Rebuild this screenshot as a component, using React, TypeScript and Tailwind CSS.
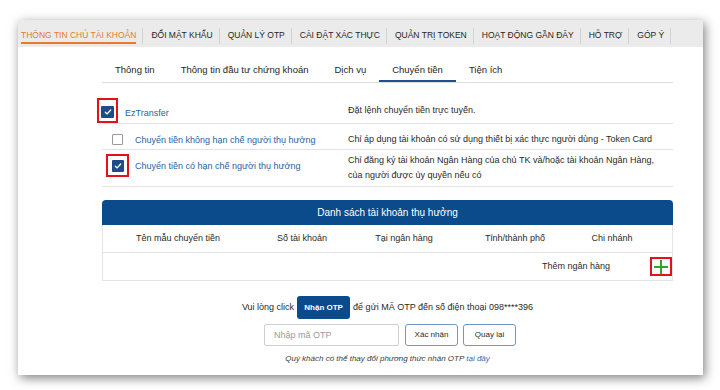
const topTabs = [
  "THÔNG TIN CHỦ TÀI KHOẢN",
  "ĐỔI MẬT KHẨU",
  "QUẢN LÝ OTP",
  "CÀI ĐẶT XÁC THỰC",
  "QUẢN TRỊ TOKEN",
  "HOẠT ĐỘNG GẦN ĐÂY",
  "HỖ TRỢ",
  "GÓP Ý",
];

const subTabs = ["Thông tin", "Thông tin đầu tư chứng khoán", "Dịch vụ", "Chuyển tiền", "Tiện ích"];

const columns = ["Tên mẫu chuyển tiền", "Số tài khoản", "Tại ngân hàng", "Tỉnh/thành phố", "Chi nhánh"];

function CheckBox({ checked, size = "w-[12px] h-[12px]" }: { checked: boolean; size?: string }) {
  if (!checked) {
    return <span className={`${size} block border border-[#9a9a9a] bg-white rounded-[1px]`} />;
  }
  return (
    <span className={`${size} flex items-center justify-center bg-[#1d4c8a] rounded-[1px]`}>
      <svg viewBox="0 0 12 12" className="w-[10px] h-[10px]">
        <path d="M2.8 6.3 L5 8.3 L9.2 3.6" fill="none" stroke="white" strokeWidth="1.6" strokeLinecap="round" strokeLinejoin="round" />
      </svg>
    </span>
  );
}

function TopTabs() {
  return (
    <div className="mt-[3px] h-[27px] bg-[#ebebeb] flex items-start text-[8.5px] text-[#262626]">
      {topTabs.map((t, i) => (
        <div key={t} className="flex items-start">
          <div className={`${i === 0 ? "pl-[3px]" : "pl-[8px]"} pr-[6px] pt-[10px]`}>
            <span
              className={`block leading-[11px] ${
                i === 0 ? "text-[#e8792e] border-b-2 border-[#e8792e] pb-[1px]" : ""
              }`}
            >
              {t}
            </span>
          </div>
          <div className="w-px h-[16px] mt-[8px] bg-[#d2d2d2]" />
        </div>
      ))}
    </div>
  );
}

function SubTabs() {
  return (
    <div className="mt-[11px] flex border-b border-[#dedede] text-[9.5px] text-[#262626]">
      {subTabs.map((t) => (
        <div
          key={t}
          className={`px-[13px] pt-[6px] pb-[4px] leading-[12px] border-b-2 ${
            t === "Chuyển tiền" ? "border-[#1d4f91]" : "border-transparent"
          }`}
        >
          {t}
        </div>
      ))}
    </div>
  );
}

function ServiceRows() {
  return (
    <div className="mt-[14px] text-[9px]">
      <div className="flex h-[27px] border-b border-[#e3e3e3]">
        <div className="w-[246px] flex items-start pt-[1px]">
          <span className="-ml-[5px] w-[21px] h-[25px] border-2 border-[#e3111b] flex items-center justify-center pt-[3px]">
            <CheckBox checked size="w-[13px] h-[12px]" />
          </span>
          <span className="ml-[7px] mt-[9px] leading-[12px] text-[#2a62a6]">EzTransfer</span>
        </div>
        <div className="pt-[7px] leading-[12px] text-[#2a2a2a]">Đặt lệnh chuyển tiền trực tuyến.</div>
      </div>
      <div className="flex h-[26px] border-b border-[#e3e3e3]">
        <div className="w-[246px] flex items-start">
          <span className="ml-[10px] mt-[10px]">
            <CheckBox checked={false} size="w-[11px] h-[11px]" />
          </span>
          <span className="ml-[12px] mt-[10px] leading-[12px] text-[#2a62a6]">
            Chuyển tiền không hạn chế người thụ hưởng
          </span>
        </div>
        <div className="pt-[9px] leading-[12px] text-[#2a2a2a]">
          Chỉ áp dụng tài khoản có sử dụng thiết bị xác thực người dùng - Token Card
        </div>
      </div>
      <div className="flex h-[37px] border-b border-[#e3e3e3]">
        <div className="w-[246px] flex items-start">
          <span className="ml-[4px] mt-[4px] w-[23px] h-[23px] border-2 border-[#e3111b] flex items-center justify-center">
            <CheckBox checked />
          </span>
          <span className="ml-[6px] mt-[10px] leading-[12px] text-[#2a62a6]">
            Chuyển tiền có hạn chế người thụ hưởng
          </span>
        </div>
        <div className="pt-[3px] leading-[15px] text-[#2a2a2a]">
          Chỉ đăng ký tài khoản Ngân Hàng của chủ TK và/hoặc tài khoản Ngân Hàng,
          <br />
          của người được ủy quyền nếu có
        </div>
      </div>
    </div>
  );
}

function BeneficiaryTable() {
  return (
    <div className="mt-[13px] text-[9px] text-[#2a2a2a]">
      <div className="h-[25px] bg-[#0b4a8b] rounded-t-[4px] flex items-center justify-center text-white text-[10px]">
        Danh sách tài khoản thụ hưởng
      </div>
      <div className="border-x border-[#e4e4e4]">
        <div className="grid grid-cols-[150px_98px_106px_116px_78px_1fr] h-[28px] items-center border-b border-[#e4e4e4] text-center">
          {columns.map((c) => (
            <div key={c}>{c}</div>
          ))}
          <div />
        </div>
        <div className="h-[28px] flex items-center justify-end border-b border-[#e4e4e4]">
          <span>Thêm ngân hàng</span>
          <span className="ml-[40px] w-[22px] h-[19px] border-2 border-[#e3111b] flex items-center justify-center">
            <svg viewBox="0 0 14 14" className="w-[14px] h-[14px]">
              <rect x="6" y="0" width="2" height="14" fill="#2aa82a" />
              <rect x="0" y="6" width="14" height="2" fill="#2aa82a" />
            </svg>
          </span>
        </div>
      </div>
    </div>
  );
}

function OtpBox() {
  return (
    <div className="text-[9px] text-[#2a2a2a]">
      <div className="mt-[15px] flex items-center justify-center">
        <span>Vui lòng click</span>
        <button className="ml-[3px] w-[53px] h-[23px] rounded-[3px] bg-[#0b4a8b] text-white text-[8px] font-bold">
          Nhận OTP
        </button>
        <span className="ml-[3px]">để gửi MÃ OTP đến số điện thoại 098****396</span>
      </div>
      <div className="mt-[5px] pl-[5px] flex items-center justify-center">
        <input
          placeholder="Nhập mã OTP"
          className="w-[135px] h-[22px] border border-[#cfcfcf] rounded-[2px] pl-[9px] text-[9px] placeholder:text-[#9a9a9a] outline-none"
        />
        <button className="ml-[6px] w-[53px] h-[22px] border border-[#6d98c8] rounded-[3px] bg-white text-[8px] text-[#2a2a2a]">
          Xác nhận
        </button>
        <button className="ml-[5px] w-[53px] h-[22px] border border-[#6d98c8] rounded-[3px] bg-white text-[8px] text-[#2a2a2a]">
          Quay lại
        </button>
      </div>
      <div className="mt-[8px] text-center leading-[10px] italic text-[8px] text-[#3a3a3a]">
        Quý khách có thể thay đổi phương thức nhận OTP <span className="text-[#2d6bb0]">tại đây</span>
      </div>
    </div>
  );
}

export default function App() {
  return (
    <div className="w-[720px] h-[390px] bg-white pt-[17px] pl-[18px] font-['Liberation_Sans',Arial,sans-serif]">
      <div className="w-[685px] h-[355px] bg-white shadow-[2px_3px_10px_rgba(0,0,0,0.5)]">
        <TopTabs />
        <div className="ml-[84px] w-[571px]">
          <SubTabs />
          <ServiceRows />
          <BeneficiaryTable />
          <OtpBox />
        </div>
      </div>
    </div>
  );
}
